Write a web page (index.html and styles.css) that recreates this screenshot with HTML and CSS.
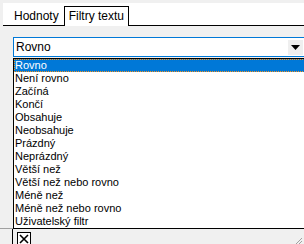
FILE: index.html
```html
<!DOCTYPE html>
<html lang="cs">
  <head>
    <meta charset="UTF-8" />
    <title>Filtry textu</title>
    <link rel="stylesheet" href="styles.css">
  </head>
  <body>
    <div class="tabs">
      <div class="tab">Hodnoty</div>
      <div class="tab active">Filtry textu</div>
    </div>

    <div class="combo">
      <span class="combo-value">Rovno</span>
      <span class="combo-btn">
        <svg width="9" height="5" viewBox="0 0 9 5"><path d="M0 0h9L4.5 5z" fill="#000"/></svg>
      </span>
    </div>

    <ul class="list">
      <li class="selected">Rovno</li>
      <li>Není rovno</li>
      <li>Začíná</li>
      <li>Končí</li>
      <li>Obsahuje</li>
      <li>Neobsahuje</li>
      <li>Prázdný</li>
      <li>Neprázdný</li>
      <li>Větší než</li>
      <li>Větší než nebo rovno</li>
      <li>Méně než</li>
      <li>Méně než nebo rovno</li>
      <li>Uživatelský filtr</li>
    </ul>

    <div class="footer">
      <span class="divider"></span>
      <span class="close">
        <svg width="10" height="10" viewBox="0 0 10 10"><path d="M1 1l8 8M9 1l-8 8" stroke="#000" stroke-width="1.6"/></svg>
      </span>
      <svg class="grip" width="9" height="9" viewBox="0 0 9 9">
        <path d="M8 1L1 8M8 4L4 8M8 7L7 8" stroke="#a0a0a0" stroke-width="1"/>
      </svg>
    </div>
  </body>
</html>
```

FILE: styles.css
```css
body {
  margin: 0;
  height: 244px;
  overflow: hidden;
  background-color: #f0f0f0;
  font-family: "Liberation Sans", Arial, sans-serif;
  font-size: 11px;
  color: #000;
}

/* zalozky */
.tabs {
  margin: 3px 0 0 3px;
  height: 22px;
  background-color: #fff;
  border-bottom: 1px solid #000;
  display: flex;
  align-items: flex-end;
}

.tab {
  height: 18px;
  line-height: 18px;
  padding: 0 5px 0 11px;
  font-size: 12px;
}

.tab.active {
  height: 19px;
  padding: 0 4px 0 4px;
  border: 1px solid #000;
  border-bottom: none;
  margin-bottom: -1px;
  background-color: #fff;
}

/* rozbalovaci seznam */
.combo {
  margin: 11px -3px 0 13px;
  height: 18px;
  border: 1px solid #0078d7;
  background-color: #fff;
  display: flex;
  align-items: center;
  justify-content: space-between;
}

.combo-value {
  padding-left: 2px;
  font-size: 12px;
}

.combo-btn {
  width: 15px;
  height: 15px;
  margin-right: 3px;
  background-color: #efefef;
  display: flex;
  align-items: center;
  justify-content: center;
}

.list {
  position: relative;
  z-index: 1;
  list-style: none;
  margin: 1px -3px 0 13px;
  padding: 0;
  background-color: #fff;
  border: 1px solid #000;
  border-right: none;
}

.list li {
  height: 13px;
  line-height: 13px;
  padding-left: 1px;
}

.list li.selected {
  background-color: #0078d7;
  color: #fff;
  outline: 1px dotted #f7931e;
  outline-offset: -1px;
}

.footer {
  margin-top: -1px;
  height: 17px;
  border-top: 1px solid #a0a0a0;
  display: flex;
  align-items: flex-end;
  padding-left: 12px;
}

.divider {
  width: 1px;
  height: 17px;
  background-color: #000;
  margin-right: 4px;
}

.close {
  width: 12px;
  height: 12px;
  border: 1px solid #000;
  background-color: #fff;
  display: flex;
  align-items: center;
  justify-content: center;
}

.grip {
  margin: 0 1px 0 auto;
}
```
